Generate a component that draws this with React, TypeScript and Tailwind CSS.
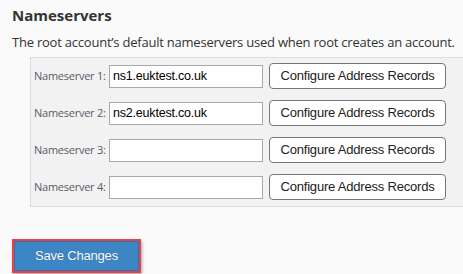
import React from "react";

const rows = [
  { n: 1, v: "ns1.euktest.co.uk" },
  { n: 2, v: "ns2.euktest.co.uk" },
  { n: 3, v: "" },
  { n: 4, v: "" },
];

export default function App() {
  return (
    <div className="w-[463px] h-[274px] overflow-hidden bg-[#fafafa] pl-3 pt-[5px] font-['Open_Sans',sans-serif] text-[#333]">
      <h2 className="text-[15px] leading-5 font-bold text-[#333]">Nameservers</h2>
      <p className="mt-2 text-[13px] leading-[18px] tracking-[-0.22px] whitespace-nowrap">
        The root account’s default nameservers used when root creates an account.
      </p>
      <div className="mt-[6px] ml-[18px] w-[450px] border border-[#dddddd] bg-[#f2f2f2] pl-[3px] pt-[5px] pb-[6px] flex flex-col gap-[11px]">
        {rows.map((r) => (
          <div key={r.n} className="flex items-center h-[26px]">
            <label className="w-[75px] shrink-0 text-[11px] leading-4 tracking-[-0.25px] text-[#5c5966]">
              Nameserver {r.n}:
            </label>
            <input
              readOnly
              value={r.v}
              className="w-[154px] h-[23px] shrink-0 border border-[#a9a9a9] bg-white px-[3px] font-['Liberation_Sans',Arial,sans-serif] text-[12.5px] tracking-[-0.2px] text-black outline-none"
            />
            <button className="ml-[6px] w-[177px] h-[26px] shrink-0 rounded-[4px] border border-[#767676] bg-white font-['Liberation_Sans',Arial,sans-serif] text-[13px] tracking-[-0.2px] text-[#222]">
              Configure Address Records
            </button>
          </div>
        ))}
      </div>
      <div className="mt-[32px] w-[129px] h-[34px] border-2 border-[#e8414a] shadow-[1px_2px_3px_rgba(0,0,0,0.35)]">
        <button className="w-full h-full bg-[#3d86c6] border border-[#3572aa] text-white font-['Liberation_Sans',Arial,sans-serif] text-[13px] tracking-[-0.2px] [text-shadow:0_0_1px_rgba(0,0,0,0.35)]">
          Save Changes
        </button>
      </div>
    </div>
  );
}
